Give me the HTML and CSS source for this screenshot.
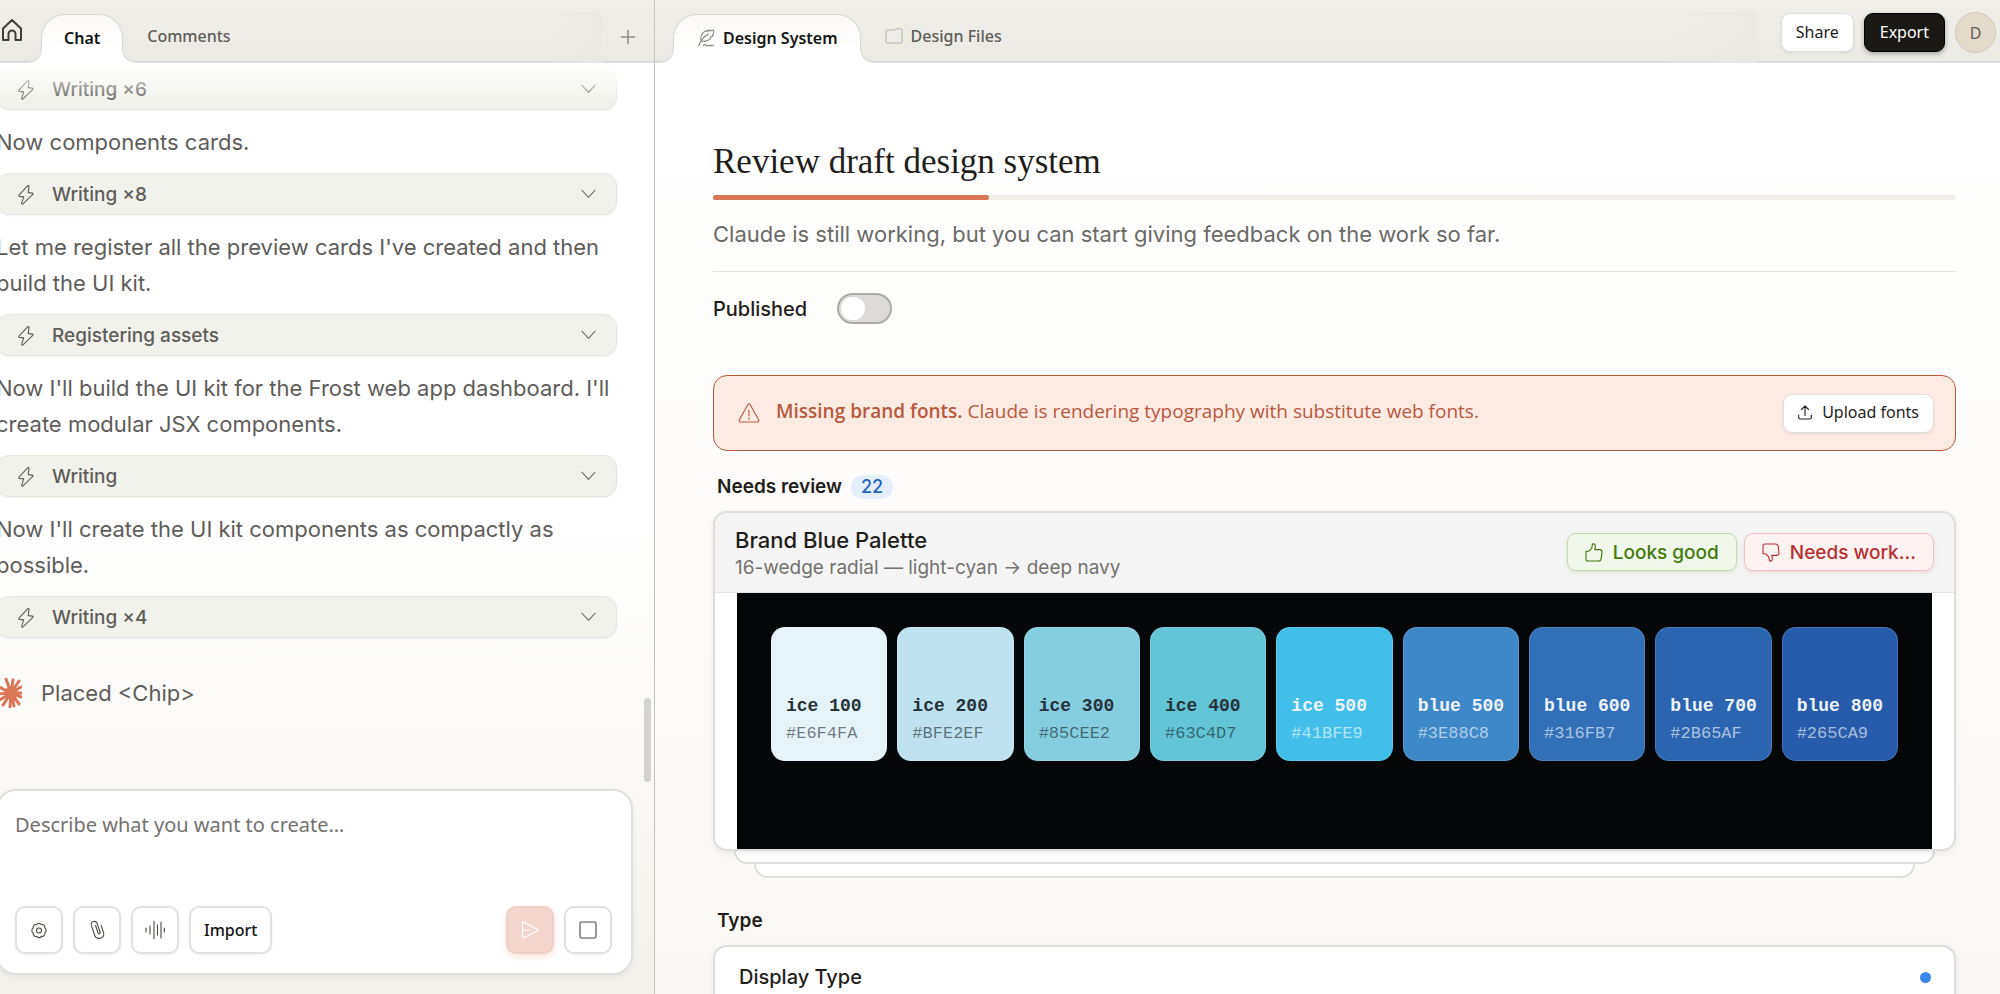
FILE: index.html
```html
<!DOCTYPE html>
<html lang="en">
<head>
<meta charset="utf-8">
<meta name="viewport" content="width=device-width, initial-scale=1">
<title>Review draft design system</title>
<link rel="stylesheet" href="styles.css">
</head>
<body>
<svg class="defs" aria-hidden="true">
  <symbol id="bolt" viewBox="0 0 16 20"><path d="M9.600.800 1 10.200c-.4.500-.2 1.100.500 1.200l4.200.500-2 6.200c-.3 1 .6 1.500 1.300.800l9.800-9.600c.5-.5.3-1.100-.4-1.200l-4.200-.5L11 1.400C11.200.500 10.200.200 9.600.800z"/></symbol>
  <symbol id="chevron" viewBox="0 0 16 10"><path d="M1 1l7 7.500L15 1"/></symbol>
</svg>

<div class="app">
  <aside class="side">
    <nav class="bar">
      <a class="home" href="#" aria-label="Home">
        <svg width="22" height="24" viewBox="0 0 22 24"><path d="M2 10.500 11 2l9 8.500V22h-5.500v-6a3.500 3.500 0 0 0-7 0v6H2z"/></svg>
      </a>
      <button class="tab active" type="button">Chat</button>
      <button class="tab" type="button">Comments</button>
      <span class="fade"></span>
      <button class="plus" type="button" aria-label="New chat"><svg width="14" height="14" viewBox="0 0 14 14"><path d="M7 0v14M0 7h14"/></svg></button>
    </nav>

    <section class="chat">
      <button class="pill" type="button"><svg class="bolt"><use href="#bolt"/></svg><span>Writing ×6</span><svg class="chev"><use href="#chevron"/></svg></button>
      <p>Now components cards.</p>
      <button class="pill" type="button"><svg class="bolt"><use href="#bolt"/></svg><span>Writing ×8</span><svg class="chev"><use href="#chevron"/></svg></button>
      <p>Let me register all the preview cards I've created and then build the UI kit.</p>
      <button class="pill" type="button"><svg class="bolt"><use href="#bolt"/></svg><span>Registering assets</span><svg class="chev"><use href="#chevron"/></svg></button>
      <p>Now I'll build the UI kit for the Frost web app dashboard. I'll create modular JSX components.</p>
      <button class="pill" type="button"><svg class="bolt"><use href="#bolt"/></svg><span>Writing</span><svg class="chev"><use href="#chevron"/></svg></button>
      <p>Now I'll create the UI kit components as compactly as possible.</p>
      <button class="pill" type="button"><svg class="bolt"><use href="#bolt"/></svg><span>Writing ×4</span><svg class="chev"><use href="#chevron"/></svg></button>
      <div class="status">
        <svg width="26" height="30" viewBox="-13 -15 26 30"><path d="M2 0 4-13M2 0 10-12M2 0 12-6M2 0h11M2 0l10 4M2 0l8 11M2 0l3 13M2 0 1 14M2 0-6 12M2 0-11 8M2 0-13 1M2 0-12-7M2 0-3-14"/><circle cx="2" cy="0" r="5"/></svg>
        <span>Placed &lt;Chip&gt;</span>
      </div>
      <span class="thumb"></span>
    </section>

    <form class="composer">
      <textarea rows="3" placeholder="Describe what you want to create…" aria-label="Describe what you want to create"></textarea>
      <div class="tools">
        <button class="tool" type="button" aria-label="Settings">
          <svg width="16" height="17" viewBox="0 0 16 17"><circle cx="8" cy="8.500" r="2.500"/><path d="M13.900 6.050A3 3 0 0 1 13.900 10.950A3 3 0 0 1 10.450 14.400A3 3 0 0 1 5.550 14.400A3 3 0 0 1 2.100 10.950A3 3 0 0 1 2.100 6.050A3 3 0 0 1 5.550 2.600A3 3 0 0 1 10.450 2.600A3 3 0 0 1 13.900 6.050z"/></svg>
        </button>
        <button class="tool" type="button" aria-label="Attach">
          <svg width="15" height="20" viewBox="0 0 15 20"><path d="M5.500 5.500 8 12.800c.6 1.600 2.600 1 2.100-.6L7 3.300C5.900.200.200 1.200 1.300 5.200l3.400 10.200c1.600 4.800 10.400 3.400 9-2l-2.500-8"/></svg>
        </button>
        <button class="tool" type="button" aria-label="Voice">
          <svg width="20" height="18" viewBox="0 0 20 18"><path d="M1 7v4M5 5v8M9 0v18M12.500 4v10M16 1v16M19.300 7v4"/></svg>
        </button>
        <button class="tool import" type="button">Import</button>
        <button class="tool send" type="submit" aria-label="Send">
          <svg width="18" height="18" viewBox="0 0 18 18"><path d="M1.500 1.800c0-.7.500-1 1.100-.7l13.700 7.200c.6.300.6 1.100 0 1.400L2.600 16.900c-.6.300-1.100 0-1.100-.700zM1.500 9h7.500"/></svg>
        </button>
        <button class="tool" type="button" aria-label="Stop">
          <svg width="18" height="18" viewBox="0 0 18 18"><rect x="1" y="1" width="16" height="16" rx="1.500"/></svg>
        </button>
      </div>
    </form>
  </aside>

  <main class="main">
    <nav class="bar">
      <button class="tab active files" type="button">
        <svg width="17" height="18" viewBox="0 0 17 18"><path d="M.8 16.800C3 10.500 6 7.300 10.500 5M3 12C2 7 5 2.500 8.500 1.500l1 1 2-1.500 1 1 2.700-1c1 2.500.5 4-.7 4.700l.5 1.300-2.500.8.2 1.500C10 12 7 13 4 12M5.500 16.500q1.500-2 2.700 0 1.500 1 2.500-.5 1.200 2 2.500 0 1.200 1.500 2.500 0"/></svg>
        Design System
      </button>
      <button class="tab files" type="button">
        <svg width="18" height="16" viewBox="0 0 18 16"><path d="M1 13.500v-10Q1 2 2.500 2H9q1 0 1.500-.7t1.500-.6h3.500Q17 .7 17 2v11.500q0 1.500-1.500 1.500h-13Q1 15 1 13.500z"/></svg>
        Design Files
      </button>
      <span class="fade"></span>
      <div class="actions">
        <button class="btn" type="button">Share</button>
        <button class="btn dark" type="button">Export</button>
        <button class="avatar" type="button">D</button>
      </div>
    </nav>

    <div class="content">
      <h1>Review draft design system</h1>
      <div class="progress"><div class="progress-fill" style="width:22.2%"></div></div>
      <p class="lead">Claude is still working, but you can start giving feedback on the work so far.</p>
      <div class="publish">
        <label for="published">Published</label>
        <input id="published" class="switch" type="checkbox" role="switch">
      </div>

      <div class="alert" role="alert">
        <svg class="warn" width="22" height="20" viewBox="0 0 22 20"><path d="M9.900 1.600q1.100-1.600 2.200 0l8.500 15.200q.7 1.900-1.100 2.200h-17q-1.800-.3-1.100-2.200zM11 7v5.500M11 14.500v1.700"/></svg>
        <p><strong>Missing brand fonts.</strong> Claude is rendering typography with substitute web fonts.</p>
        <button class="btn upload" type="button"><svg width="14" height="15" viewBox="0 0 14 15"><path d="M7 10.500V1M3.500 4.500 7 1l3.500 3.500M.700 10v2.500q0 1.500 1.500 1.500h9.600q1.500 0 1.500-1.500V10"/></svg>Upload fonts</button>
      </div>

      <div class="section-head"><h2>Needs review</h2><span class="count">22</span></div>
      <article class="card">
        <header class="card-head">
          <div>
            <h3>Brand Blue Palette</h3>
            <p>16-wedge radial — light-cyan → deep navy</p>
          </div>
          <div class="verdicts">
            <button class="verdict good" type="button"><svg width="18" height="19" viewBox="0 0 18 19"><path d="M1 8.300h2.500C5.500 7 7.300 4.700 7.300 1.900 7.500.300 10 .600 10.300 2.600c.2 1.500-.1 2.800-.6 4h5q2.300.2 2.300 2.300l-.8 6.700q-.4 2.400-2.700 2.400H3Q1 18 1 16z"/></svg>Looks good</button>
            <button class="verdict bad" type="button"><svg width="18" height="19" viewBox="0 0 18 19"><path d="M1 10.700h2.500c2 1.300 3.800 3.600 3.800 6.400.2 1.600 2.700 1.300 3-.7.2-1.500-.1-2.800-.6-4h5q2.300-.2 2.300-2.300l-.8-6.700Q15.800 1 13.500 1H3Q1 1 1 3z"/></svg>Needs work…</button>
          </div>
        </header>
        <div class="card-body">
          <div class="palette">
            <div class="swatch" style="background:#E6F4FA"><b>ice 100</b><span>#E6F4FA</span></div>
            <div class="swatch" style="background:#BFE2EF"><b>ice 200</b><span>#BFE2EF</span></div>
            <div class="swatch" style="background:#85CEE2"><b>ice 300</b><span>#85CEE2</span></div>
            <div class="swatch" style="background:#63C4D7"><b>ice 400</b><span>#63C4D7</span></div>
            <div class="swatch light" style="background:#41BFE9"><b>ice 500</b><span>#41BFE9</span></div>
            <div class="swatch light" style="background:#3E88C8"><b>blue 500</b><span>#3E88C8</span></div>
            <div class="swatch light" style="background:#316FB7"><b>blue 600</b><span>#316FB7</span></div>
            <div class="swatch light" style="background:#2B65AF"><b>blue 700</b><span>#2B65AF</span></div>
            <div class="swatch light" style="background:#265CA9"><b>blue 800</b><span>#265CA9</span></div>
          </div>
        </div>
      </article>
      <div class="layer"></div>
      <div class="layer deep"></div>

      <div class="section-head type"><h2>Type</h2></div>
      <article class="card row">
        <h3>Display Type</h3>
        <span class="dot"></span>
      </article>
    </div>
  </main>
</div>
</body>
</html>
```

FILE: styles.css
```css
* { box-sizing: border-box; }

body {
  margin: 0;
  font-family: Inter, "Liberation Sans", sans-serif;
  color: #1f1e1b;
  overflow: hidden;
}

h1, h2, h3, p { margin: 0; }

button, input, textarea { font: inherit; color: inherit; }

button {
  padding: 0;
  border: 0;
  background: none;
  cursor: pointer;
}

svg {
  flex: none;
  fill: none;
  stroke: currentColor;
  stroke-width: 1.1;
  stroke-linejoin: round;
  stroke-linecap: round;
}

.defs { position: absolute; width: 0; height: 0; }

.app {
  display: grid;
  grid-template-columns: minmax(0, 655fr) minmax(0, 1345fr);
  height: 100vh;
  overflow: hidden;
}

/* Tab bars */
.bar {
  display: flex;
  flex: none;
  align-items: flex-end;
  height: 63px;
  border-bottom: 2px solid #dddcd8;
  background: linear-gradient(#f1efea, #ebe9e4);
  font-family: "Noto Sans", "Open Sans", sans-serif;
  font-size: 16px;
}

.tab {
  display: flex;
  align-items: center;
  gap: 8px;
  height: 49px;
  padding: 0 24px 2px;
  font-weight: 500;
  color: #5e5d58;
  white-space: nowrap;
}

.tab svg { stroke: #b4b3ae; }

.tab.active {
  position: relative;
  margin-bottom: -2px;
  padding: 0 22px 2px;
  border: 1px solid #d8d7d2;
  border-bottom: 0;
  border-radius: 24px 24px 0 0;
  background: linear-gradient(#faf9f6, #fff 70%);
  font-weight: 600;
  color: #141413;
}

.tab.active svg { stroke: #85847f; }

.tab.active::before,
.tab.active::after {
  content: "";
  position: absolute;
  bottom: 0;
  width: 13px;
  height: 13px;
}

.tab.active::before {
  right: 100%;
  background: radial-gradient(circle at 0 0, transparent 11px, #d8d7d2 12px, #fff 13px);
}

.tab.active::after {
  left: 100%;
  background: radial-gradient(circle at 100% 0, transparent 11px, #d8d7d2 12px, #fff 13px);
}

.tab.files { padding-left: 24px; }

.fade {
  width: 58px;
  height: 51px;
  margin: 0 0 -2px auto;
  background: linear-gradient(90deg, transparent, #ebe9e4);
}

/* Chat column */
.side {
  display: flex;
  flex-direction: column;
  min-height: 0;
  border-right: 1px solid #c4c3c1;
  background: linear-gradient(#fff 52%, #f9f8f4 82%, #f3f1ec);
}

.home {
  display: flex;
  align-self: flex-start;
  padding: 18px 18px 0 1px;
  color: #3d3d3a;
}

.home svg { stroke-width: 2; }

.plus {
  display: flex;
  align-self: center;
  margin: 12px 19px 0;
  color: #8b8a85;
}

.plus svg { stroke-width: 1.5; }

.chat {
  position: relative;
  flex: 1;
  min-height: 0;
  padding: 5px 37px 0 0;
  overflow: hidden;
  font-size: 22px;
  line-height: 36px;
  color: #5e5d59;
}

.chat::before {
  content: "";
  position: absolute;
  inset: 0 0 auto;
  height: 40px;
  background: linear-gradient(#fff, rgb(255 255 255 / 0));
}

.chat p { margin: 14px 0 13px -4px; }

.pill {
  display: flex;
  align-items: center;
  gap: 18px;
  width: calc(100% + 4px);
  height: 42px;
  margin-left: -4px;
  padding: 2px 20px 0 21px;
  border: 1px solid #e6e6df;
  border-radius: 13px;
  background: #f2f2ec;
  box-shadow: 0 1px 2px rgb(0 0 0 / 0.05);
  font-size: 19px;
  font-weight: 500;
  line-height: 24px;
}

.bolt { width: 16px; height: 20px; }

.chev { width: 15px; height: 10px; margin: 0 0 3px auto; }

.status {
  display: flex;
  align-items: center;
  gap: 19px;
  margin: 37px 0 0 -4px;
}

.status svg { fill: #d97757; stroke: #d97757; stroke-width: 3; }

.thumb {
  position: absolute;
  right: 3px;
  bottom: 7px;
  width: 7px;
  height: 84px;
  border-radius: 4px;
  background: #d3d3cf;
}

/* Composer */
.composer {
  display: flex;
  flex-direction: column;
  gap: 11px;
  margin: 0 21px 19px -4px;
  padding: 20px 19px 19px 17px;
  border: 2px solid #dfdfdc;
  border-radius: 20px;
  background: #fff;
  box-shadow: 0 2px 6px rgb(0 0 0 / 0.06);
}

.composer textarea {
  display: block;
  width: 100%;
  padding: 0;
  border: 0;
  outline: 0;
  background: none;
  resize: none;
  font-family: "Noto Sans", "Open Sans", sans-serif;
  font-size: 20px;
  line-height: 28px;
}

.composer textarea::placeholder { color: #73726e; }

.tools { display: flex; gap: 10px; }

.tool {
  display: flex;
  align-items: center;
  justify-content: center;
  width: 48px;
  height: 48px;
  border: 2px solid #e1e1df;
  border-radius: 10px;
  background: #fff;
  box-shadow: 0 1px 3px rgb(0 0 0 / 0.06);
  color: #4a4945;
}

.tool.import {
  width: auto;
  padding: 0 13px;
  font-family: "Noto Sans", "Open Sans", sans-serif;
  font-size: 16px;
  font-weight: 500;
  color: #141413;
}

.tool.send {
  margin-left: auto;
  border-color: #efcfc5;
  background: #f2d5cc;
  box-shadow: 0 3px 6px rgb(217 119 87 / 0.2);
  color: #fff;
}

/* Review column */
.main {
  display: flex;
  flex-direction: column;
  min-height: 0;
  overflow: hidden;
  background: linear-gradient(#fff 10%, #fdfcfa 50%, #f9f8f4);
}

.main .bar { padding: 0 4px 0 18px; }

.main .fade { width: 101px; }

.actions {
  display: flex;
  align-items: center;
  align-self: flex-start;
  gap: 10px;
  padding: 12px 0 0 24px;
}

.btn {
  display: flex;
  align-items: center;
  gap: 10px;
  height: 39px;
  padding: 0 14px 2px;
  border: 1px solid #dfdfdc;
  border-radius: 9px;
  background: #fff;
  box-shadow: 0 1px 3px rgb(0 0 0 / 0.08);
  font-family: "Noto Sans", "Open Sans", sans-serif;
  font-size: 16px;
  color: #1f1e1b;
  white-space: nowrap;
}

.btn.dark {
  padding: 0 15px 2px;
  border-color: #000;
  background: #1a1915;
  box-shadow: 0 2px 5px rgb(0 0 0 / 0.3);
  color: #fff;
}

.avatar {
  width: 41px;
  height: 41px;
  border: 1px solid #cfc6b8;
  border-radius: 50%;
  background: #e3dacc;
  font-size: 16px;
  color: #5e5d59;
}

.content { padding: 77px 44px 0 58px; }

h1 {
  font-family: "Liberation Serif", serif;
  font-size: 35px;
  font-weight: 400;
  line-height: 44px;
}

.progress {
  height: 5px;
  margin-top: 11px;
  border-radius: 3px;
  background: #f0eee6;
}

.progress-fill {
  height: 100%;
  border-radius: 3px;
  background: #d97757;
}

.lead {
  padding: 18px 0 21px;
  border-bottom: 1px solid #e4e4e1;
  font-size: 22px;
  line-height: 32px;
  color: #6b6a66;
}

.publish {
  display: flex;
  align-items: center;
  gap: 30px;
  margin: 21px 0 51px;
  font-size: 20px;
  font-weight: 500;
}

.switch {
  appearance: none;
  width: 55px;
  height: 31px;
  margin: 0;
  padding: 2px;
  border: 2px solid #acaba9;
  border-radius: 16px;
  background: #dcdbda;
}

.switch::before {
  content: "";
  display: block;
  width: 24px;
  height: 23px;
  border-radius: 12px;
  background: #fff;
}

.alert {
  display: flex;
  align-items: center;
  height: 76px;
  padding: 0 21px 0 24px;
  border: 1px solid #b8593b;
  border-radius: 14px;
  background: #feebe4;
  font-family: "Open Sans", "Noto Sans", sans-serif;
  font-size: 19px;
  line-height: 26px;
  color: #b8593b;
}

.alert p { flex: 1; padding: 0 16px 5px; }

.alert strong { font-weight: 600; }

.section-head {
  display: flex;
  align-items: center;
  gap: 9px;
  margin: 24px 0 12px;
  padding-left: 4px;
}

.section-head.type { margin-top: 31px; }

h2 {
  font-size: 19px;
  font-weight: 600;
  line-height: 24px;
}

.count {
  padding: 0 10px;
  border-radius: 12px;
  background: #e4effb;
  font-size: 18px;
  font-weight: 500;
  line-height: 24px;
  color: #1f66c1;
}

.card {
  position: relative;
  border: 2px solid #dededc;
  border-radius: 14px;
  background: #fff;
  box-shadow: 0 2px 6px rgb(0 0 0 / 0.07);
}

.card-head {
  display: flex;
  align-items: center;
  justify-content: space-between;
  padding: 13px 20px 10px 20px;
  border-bottom: 1px solid #e3e3e2;
  border-radius: 12px 12px 0 0;
  background: #f5f5f5;
}

.card h3 {
  font-size: 22px;
  font-weight: 500;
  line-height: 28px;
}

.card-head p {
  font-size: 19px;
  line-height: 28px;
  color: #73726e;
}

.verdicts {
  display: flex;
  gap: 7px;
  padding-bottom: 4px;
}

.verdict {
  display: flex;
  align-items: center;
  gap: 10px;
  height: 38px;
  padding: 0 17px;
  border: 1px solid;
  border-radius: 9px;
  font-size: 19px;
  font-weight: 500;
  white-space: nowrap;
}

.good {
  border-color: #c0dba8;
  background: #f1f7ea;
  box-shadow: 0 2px 4px rgb(62 120 10 / 0.12);
  color: #437a0c;
}

.bad {
  border-color: #f2c0c0;
  background: #fef2f2;
  box-shadow: 0 2px 4px rgb(184 40 40 / 0.12);
  color: #b93030;
}

.card-body { padding: 0 22px; }

.palette {
  display: grid;
  grid-template-columns: repeat(9, minmax(0, 1fr));
  gap: 10px;
  padding: 34px 34px 88px;
  background: #040608;
}

.swatch {
  display: flex;
  flex-direction: column;
  padding: 65px 0 13px 14px;
  border: 1px solid rgb(255 255 255 / 0.15);
  border-radius: 14px;
  font-family: "Liberation Mono", monospace;
  font-size: 17px;
  line-height: 27px;
  color: rgb(20 26 30 / 0.58);
  white-space: nowrap;
}

.swatch b {
  font-size: 18px;
  color: #263238;
}

.swatch.light { color: rgb(255 255 255 / 0.6); }

.swatch.light b { color: #edf4fb; }

.layer {
  height: 13px;
  margin: 0 21px;
  border: 2px solid #dededc;
  border-top: 0;
  border-radius: 0 0 14px 14px;
  background: #fff;
}

.layer.deep {
  height: 14px;
  margin: 0 41px;
}

.row {
  display: flex;
  align-items: center;
  justify-content: space-between;
  padding: 16px 23px 16px 24px;
}

.card.row h3 { font-size: 20px; }

.dot {
  width: 11px;
  height: 11px;
  border-radius: 50%;
  background: #3b87e8;
}
```
